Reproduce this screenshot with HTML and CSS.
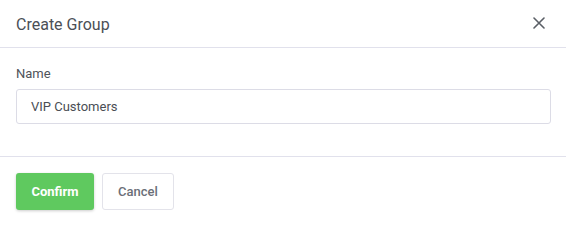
FILE: index.html
```html
<!DOCTYPE html>
<html>
<head>
<meta charset="utf-8">
<link rel="stylesheet" href="styles.css">
</head>
<body>
<div class="modal">
  <div class="modal-header">
    <div class="modal-title">Create Group</div>
    <button class="close" aria-label="Close">
      <svg width="12" height="12" viewBox="0 0 12 12"><path d="M1 1L11 11M11 1L1 11" stroke="#5a5f66" stroke-width="1.6" stroke-linecap="round"/></svg>
    </button>
  </div>
  <div class="modal-body">
    <label class="label">Name</label>
    <div class="input">VIP Customers</div>
  </div>
  <div class="modal-footer">
    <button class="btn btn-primary">Confirm</button>
    <button class="btn btn-default">Cancel</button>
  </div>
</div>
</body>
</html>
```
FILE: styles.css
```css
* { box-sizing: border-box; }
html, body { margin: 0; padding: 0; background: #fff; }
body { font-family: Roboto, "Liberation Sans", sans-serif; color: #4a4f57; }
.modal { width: 566px; height: 226px; background: #fff; }
.modal-header {
  height: 48px;
  display: flex;
  align-items: center;
  justify-content: space-between;
  padding: 0 16px;
  border-bottom: 1px solid #e1e1ec;
}
.modal-title { font-size: 16px; color: #4b4f56; padding-top: 1px; }
.close {
  border: 0; background: none; padding: 0; width: 12px; height: 12px;
  display: flex; margin-right: 5px; margin-top: -1px;
}
.modal-body { padding: 18px 15px 32px 16px; border-bottom: 1px solid #e1e1ec; }
.label { display: block; font-size: 13px; line-height: 16px; color: #4f535a; margin-bottom: 7px; }
.input {
  height: 35px;
  border: 1px solid #dcdce6;
  border-radius: 3px;
  padding: 0 14px;
  display: flex; align-items: center;
  font-size: 13px; color: #4a4e55;
}
.modal-footer { display: flex; gap: 8px; padding: 16px 16px; }
.btn {
  height: 37px; font-family: Roboto, "Liberation Sans", sans-serif;
  font-size: 13px; border-radius: 3px; cursor: pointer;
}
.btn-primary {
  width: 78px; background: #5fc95f; color: #fff; font-weight: 700;
  border: 0; box-shadow: 0 1px 3px rgba(0,0,0,0.2);
}
.btn-default {
  width: 72px; background: #fff; color: #6b6f78; font-weight: 500;
  border: 1px solid #e3e3ea;
}
```
